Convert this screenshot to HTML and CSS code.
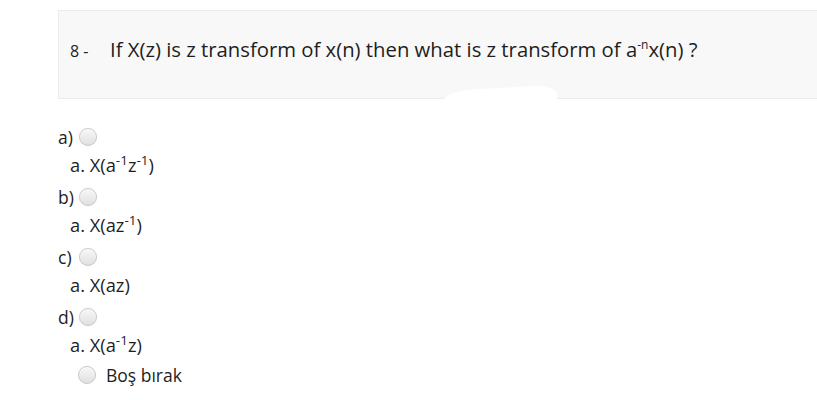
FILE: index.html
```html
<!DOCTYPE html>
<html>
<head>
<meta charset="utf-8">
<link rel="stylesheet" href="styles.css">
</head>
<body>
<div class="page">
  <div class="question">
    <span class="qno">8 -</span>
    <span class="qtext">If X(z) is z transform of x(n) then what is z transform of a<sup class="qsup">-n</sup>x(n) ?</span>
    <span class="blob"></span>
  </div>
  <div class="options">
    <div class="opt">
      <div class="label-row"><span class="letter">a)</span><span class="radio"></span></div>
      <div class="answer">a. X(a<sup>-1</sup>z<sup>-1</sup>)</div>
    </div>
    <div class="opt">
      <div class="label-row"><span class="letter">b)</span><span class="radio"></span></div>
      <div class="answer">a. X(az<sup>-1</sup>)</div>
    </div>
    <div class="opt">
      <div class="label-row"><span class="letter">c)</span><span class="radio"></span></div>
      <div class="answer">a. X(az)</div>
    </div>
    <div class="opt">
      <div class="label-row"><span class="letter">d)</span><span class="radio"></span></div>
      <div class="answer">a. X(a<sup>-1</sup>z)</div>
    </div>
    <div class="blank"><span class="radio"></span><span class="blank-text">Boş bırak</span></div>
  </div>
</div>
</body>
</html>
```
FILE: styles.css
```css
html, body {
  margin: 0;
  padding: 0;
  background: #fff;
}
body {
  font-family: "Open Sans", "Liberation Sans", sans-serif;
  color: #1e1e1e;
  width: 817px;
  height: 400px;
  overflow: hidden;
}
.page {
  padding-top: 10px;
}
.question {
  position: relative;
  margin-left: 58px;
  background: #f8f8f8;
  border: 1px solid #ebebeb;
  border-right: none;
  display: flex;
  align-items: baseline;
  padding-top: 24px;
  box-sizing: border-box;
  height: 89px;
}
.qno {
  margin-left: 11px;
  font-size: 16px;
  width: 40px;
}
.qtext {
  font-size: 20.3px;
}
.qsup {
  font-size: 12px;
  vertical-align: 8px;
  line-height: 0;
}
.blob {
  position: absolute;
  left: 382px;
  top: 77px;
  width: 116px;
  height: 14px;
  background: #fff;
  border-radius: 30px 22px 0 0 / 14px 10px 0 0;
  transform: skewY(-3deg);
}
.options {
  padding-left: 58px;
  padding-top: 24px;
  font-size: 17.5px;
}
.opt {
  display: flex;
  flex-direction: column;
}
.label-row {
  display: flex;
  align-items: center;
  height: 28px;
}
.letter {
  width: 21px;
}
.radio {
  display: inline-block;
  width: 18px;
  height: 18px;
  box-sizing: border-box;
  border-radius: 50%;
  border: 1px solid #c8c8c8;
  background: linear-gradient(#f8f8f8, #e0e0e0);
  box-shadow: inset 0 1px 1px rgba(255,255,255,0.9), 0 0 1px rgba(0,0,0,0.08);
}
.answer {
  padding-left: 12px;
  height: 32px;
  line-height: 28px;
  font-size: 18.3px;
}
.answer sup {
  font-size: 13.5px;
  vertical-align: 7px;
  line-height: 0;
}
.blank {
  display: flex;
  align-items: center;
  padding-left: 20px;
  height: 24px;
}
.blank-text {
  margin-left: 10px;
}
```
